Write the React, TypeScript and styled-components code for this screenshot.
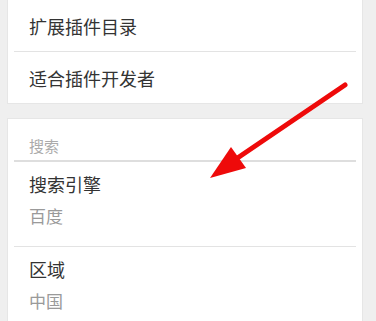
import { createGlobalStyle, styled } from "styled-components";

const GlobalStyle = createGlobalStyle`
  html, body {
    margin: 0;
    padding: 0;
    background: #efefef;
  }
  body {
    font-family: "Noto Sans CJK SC", "Noto Sans", sans-serif;
  }
`;

const Page = styled.div`
  position: relative;
  width: 376px;
  height: 321px;
  overflow: hidden;
  padding: 0 13px 0 7px;
  box-sizing: border-box;
  display: flex;
  flex-direction: column;
  gap: 14px;
`;

const Card = styled.section<{ $cut?: boolean }>`
  background: #ffffff;
  border: 1px solid #e6e6e6;
  border-top: ${p => (p.$cut ? "none" : "1px solid #e6e6e6")};
  display: flex;
  flex-direction: column;
`;

const LinkRow = styled.div`
  height: 51px;
  display: flex;
  align-items: center;
  padding-left: 21px;
  font-size: 18px;
  color: #333333;
`;

const Divider = styled.div<{ $thick?: boolean }>`
  height: ${p => (p.$thick ? "2px" : "1px")};
  margin: 0 6px;
  background: ${p => (p.$thick ? "#dedede" : "#e3e3e3")};
`;

const GroupTitle = styled.div`
  height: 41px;
  box-sizing: border-box;
  padding: 16px 0 0 21px;
  font-size: 15px;
  line-height: 22px;
  color: #ababab;
`;

const Setting = styled.div`
  height: 84px;
  box-sizing: border-box;
  padding: 11px 0 0 21px;
  display: flex;
  flex-direction: column;
  gap: 10px;
`;

const SettingName = styled.div`
  font-size: 18px;
  line-height: 22px;
  color: #333333;
`;

const SettingValue = styled.div`
  font-size: 17px;
  line-height: 22px;
  color: #9a9a9a;
`;

const Arrow = styled.svg`
  position: absolute;
  left: 0;
  top: 0;
  pointer-events: none;
`;

const links = ["扩展插件目录", "适合插件开发者"];

const settings = [
  { name: "搜索引擎", value: "百度" },
  { name: "区域", value: "中国" },
];

export default function App() {
  return (
    <>
      <GlobalStyle />
      <Page>
        <Card $cut>
          {links.map((l, i) => (
            <div key={l}>
              {i > 0 && <Divider />}
              <LinkRow>{l}</LinkRow>
            </div>
          ))}
        </Card>
        <Card>
          <GroupTitle>搜索</GroupTitle>
          <Divider $thick />
          {settings.map((s, i) => (
            <div key={s.name}>
              {i > 0 && <Divider />}
              <Setting>
                <SettingName>{s.name}</SettingName>
                <SettingValue>{s.value}</SettingValue>
              </Setting>
            </div>
          ))}
        </Card>
        <Arrow width="376" height="321" viewBox="0 0 376 321">
          <line x1="345" y1="85" x2="236" y2="159" stroke="#ee0a0a" strokeWidth="5" strokeLinecap="round" />
          <polygon points="210,178 231,147 246,168" fill="#ee0a0a" />
        </Arrow>
      </Page>
    </>
  );
}
